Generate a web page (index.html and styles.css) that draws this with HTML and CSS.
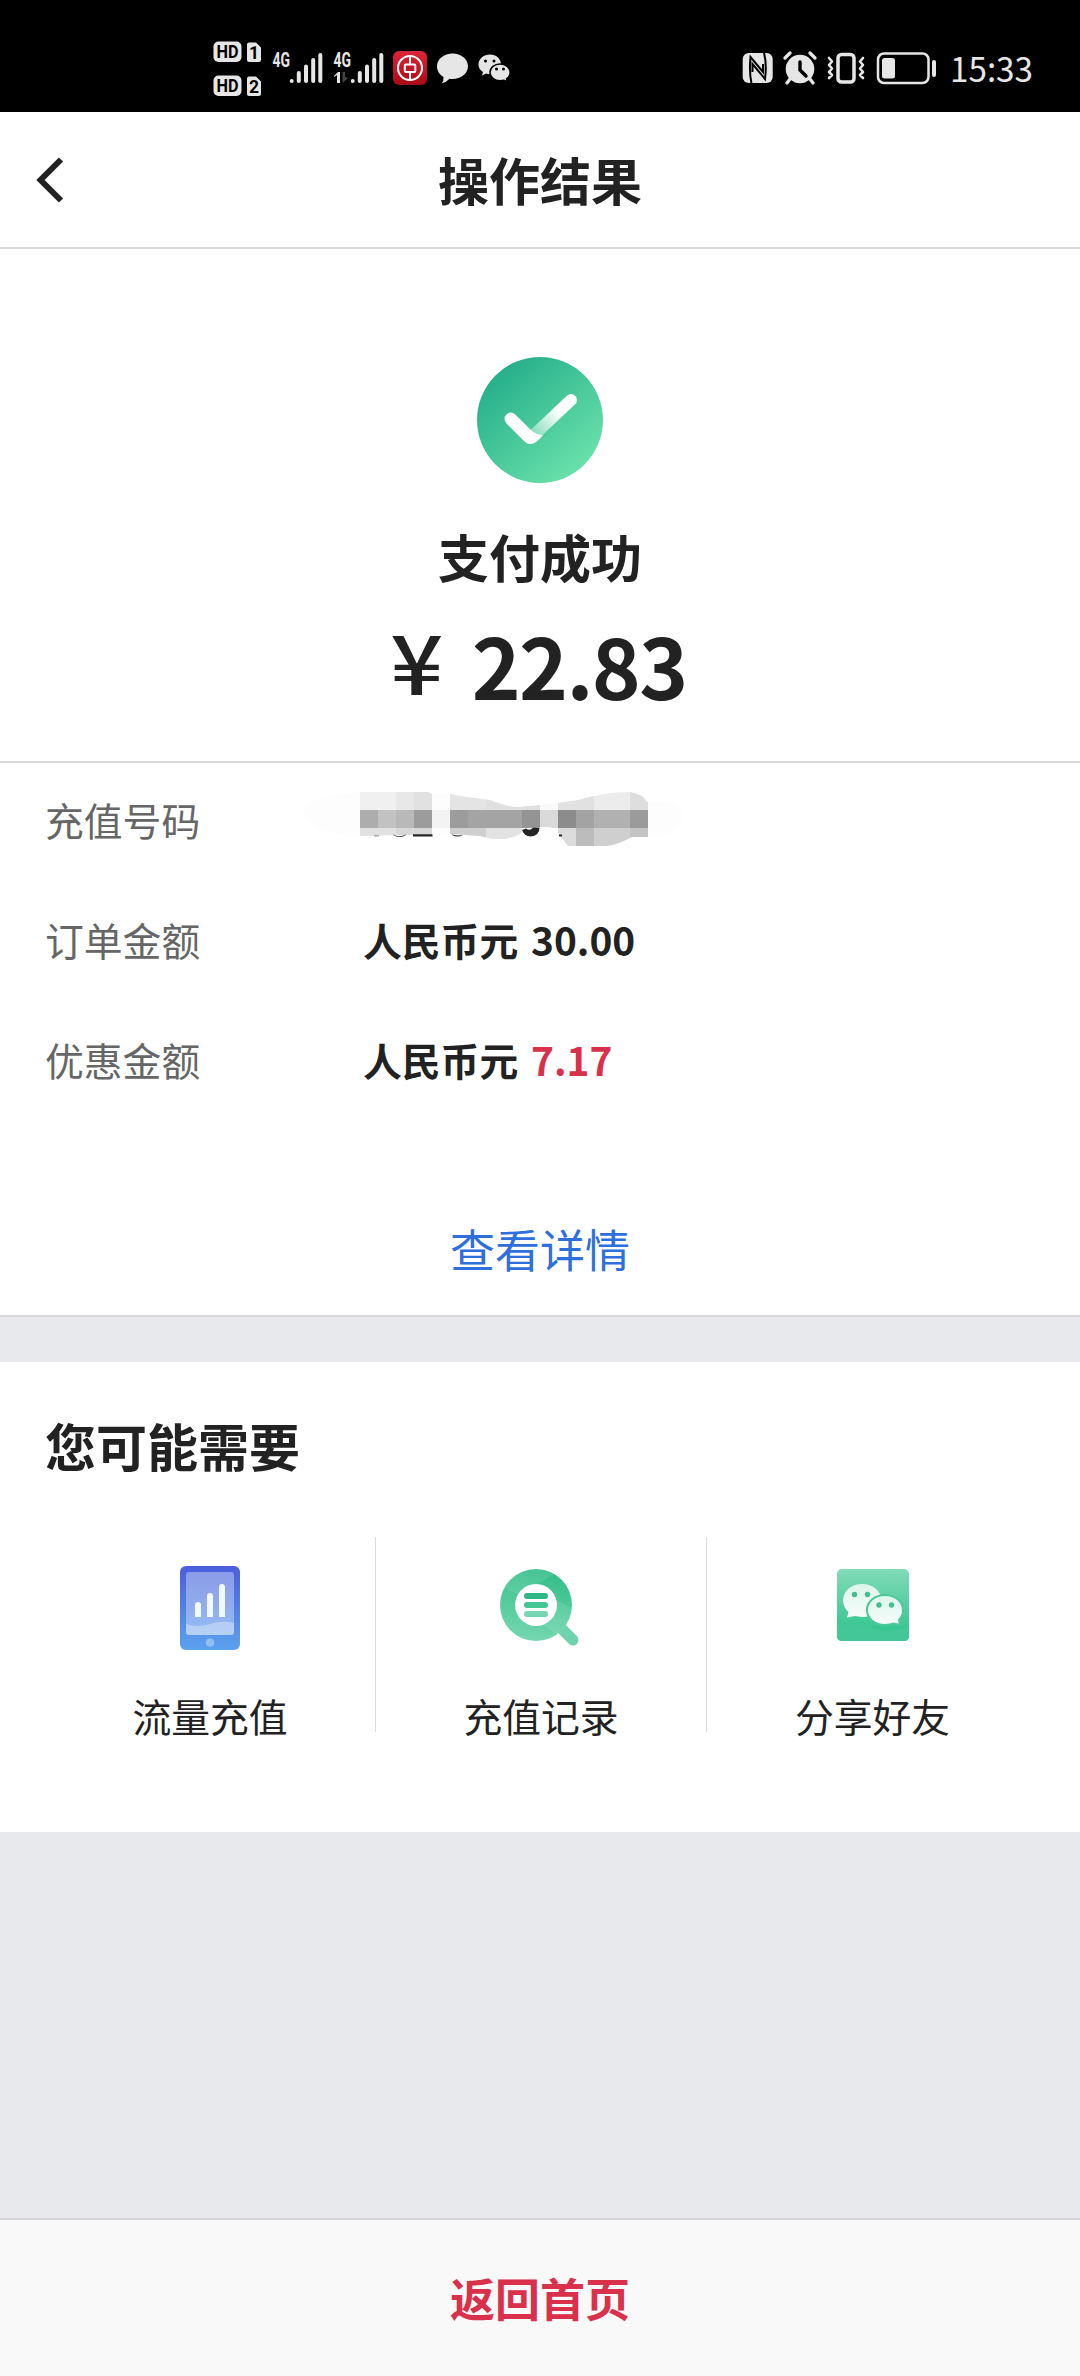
FILE: index.html
```html
<!DOCTYPE html>
<html lang="zh-CN">
<head>
<meta charset="utf-8">
<title>操作结果</title>
<link rel="stylesheet" href="styles.css">
</head>
<body>
<div class="screen">
  <div class="status">
    <div class="status-left">
      <svg width="48" height="60" viewBox="213 40 48 60">
        <g fill="#e6e6e6"><rect x="213.500" y="41.500" width="28" height="20.500" rx="5"/><rect x="213.500" y="75.500" width="28" height="20.500" rx="5"/>
        <path d="M249 42.500h7l5 5v12q0 2.500-2.500 2.500h-9.500q-2 0-2-2v-15.500q0-2 2-2zM249 76.500h7l5 5v12q0 2.500-2.500 2.500h-9.500q-2 0-2-2v-15.500q0-2 2-2z"/></g>
        <g class="badge-text"><text x="216.500" y="58.300" textLength="22" lengthAdjust="spacingAndGlyphs">HD</text><text x="216.500" y="92.300" textLength="22" lengthAdjust="spacingAndGlyphs">HD</text><text x="249" y="58.800">1</text><text x="249" y="92.800">2</text></g>
      </svg>
      <svg class="signal" width="52" height="60" viewBox="272 40 52 60">
        <text class="net-text" x="272.500" y="66.500" textLength="17.500" lengthAdjust="spacingAndGlyphs">4G</text>
        <g class="bars"><path d="M291.700 81v0M298.800 81V73M306 81V66.500M313.200 81V60M320.300 81V55"/></g>
      </svg>
      <svg class="signal-second" width="52" height="60" viewBox="333 40 52 60">
        <text class="net-text" x="333.500" y="66.500" textLength="17.500" lengthAdjust="spacingAndGlyphs">4G</text>
        <path d="M334 76l4-4h2v11h-3v-8l-3 2z" fill="#e6e6e6"/><path d="M342.500 72v11l5.500-5-3-1v-5z" fill="#444"/>
        <g class="bars"><path d="M352.700 81v0M359.800 81V73M367 81V66.500M374.200 81V60M381.300 81V55"/></g>
      </svg>
      <svg width="34" height="60" viewBox="393 40 34 60">
        <defs><linearGradient id="bank" x2="0" y2="1"><stop stop-color="#dc2636"/><stop offset="1" stop-color="#a80b15"/></linearGradient></defs>
        <rect x="393" y="51" width="34" height="34" rx="6" fill="url(#bank)"/>
        <g fill="none" stroke="#fff" stroke-width="2"><circle cx="410" cy="68" r="12"/><rect x="404.800" y="64.500" width="10.500" height="7.500" rx="1"/><path d="M410 56v8.500M410 72v8"/></g>
      </svg>
      <svg width="33" height="60" viewBox="436 40 33 60"><path fill="#e6e6e6" d="M452.500 53.500c8.600 0 15.500 5.600 15.500 12.800S461.100 79 452.500 79q-1.500 0-3-.2-3 3.600-7.800 4.400 2.200-2 1.800-6.200c-4-2.300-6.500-6-6.500-10.700 0-7.200 6.900-12.800 15.500-12.800z"/></svg>
      <svg width="32" height="60" viewBox="478 40 32 60">
        <path fill="#e6e6e6" d="M490 54.500c6 0 11 4 11 10s-5 9.500-11 9.500q-2 0-4-.5l-4 2 1-3.500c-3-2-4.500-4.500-4.500-7.500 0-6 5.500-10 11.500-10z"/>
        <path fill="#e6e6e6" stroke="#000" stroke-width="1.500" d="M500 64c5.500 0 10.200 3.600 10.200 8.300q0 4.200-3.700 6.500l.8 3-3.300-1.600q-2 .5-4 .5c-5.500 0-10-3.700-10-8.400s4.500-8.300 10-8.300z"/>
        <g><circle cx="485.500" cy="61" r="1.500"/><circle cx="494" cy="61" r="1.500"/><circle cx="496.500" cy="69" r="1.500"/><circle cx="503.500" cy="69" r="1.500"/></g>
      </svg>
    </div>
    <div class="status-right">
      <svg width="32" height="60" viewBox="742 40 32 60">
        <rect x="742.700" y="53" width="30" height="30" rx="6" fill="#e6e6e6"/>
        <path fill="none" stroke="#000" stroke-width="2" d="M751.500 83.500q-2.500-12-1-26.500l12.500 15V64M764 52.500q3 12 1 26.500l-12.500-15v8"/>
      </svg>
      <svg width="34" height="60" viewBox="783 40 34 60">
        <circle cx="800" cy="69" r="14.300" fill="#e6e6e6"/>
        <path d="M785 58l5-5M815 58l-5-5M790 79l-3 4M810 79l3 4" stroke="#e6e6e6" stroke-width="3.200" stroke-linecap="round"/>
        <path d="M800 62v8l6 6" fill="none" stroke="#000" stroke-width="3.400" stroke-linecap="round"/>
      </svg>
      <svg class="vibrate" width="40" height="60" viewBox="826 40 40 60"><g fill="none" stroke="#e6e6e6"><rect x="838" y="54.500" width="16" height="27.500" rx="3.500" stroke-width="3.500"/><path stroke-width="2.600" stroke-linejoin="round" stroke-linecap="round" d="M829 58l3 3.500-3 3.500 3 3.500-3 3.500 3 3-3 3M863 58l-3 3.500 3 3.500-3 3.500 3 3.500-3 3 3 3"/></g></svg>
      <svg width="61" height="60" viewBox="876 40 61 60"><rect x="878" y="53.500" width="50.500" height="29.500" rx="6" fill="none" stroke="#e6e6e6" stroke-width="2.500"/><rect x="882" y="58" width="13" height="20.500" rx="2.500" fill="#e6e6e6"/><rect x="932" y="60" width="4" height="17" rx="2" fill="#e6e6e6"/></svg>
      <svg width="84" height="60" viewBox="950 40 84 60"><text class="clock" x="950" y="82" textLength="83" lengthAdjust="spacingAndGlyphs">15:33</text></svg>
    </div>
  </div>

  <header class="header">
    <svg class="back" width="32" height="46" viewBox="0 0 32 46"><path d="M27 2.500L6.500 23 27 43.500" fill="none" stroke="#222" stroke-width="6"/></svg>
    <h1 class="title">操作结果</h1>
  </header>

  <section class="result">
    <svg width="126" height="126" viewBox="0 0 126 126">
      <defs>
        <linearGradient id="disc" x1=".15" y1=".1" x2=".85" y2=".9"><stop stop-color="#25ae8a"/><stop offset="1" stop-color="#6be2ab"/></linearGradient>
        <linearGradient id="fade" gradientUnits="userSpaceOnUse" x1="58" y1="78" x2="82" y2="54"><stop stop-color="#fff" stop-opacity=".35"/><stop offset="1" stop-color="#fff"/></linearGradient>
      </defs>
      <circle cx="63" cy="63" r="63" fill="url(#disc)"/>
      <path d="M58 77L94 43" stroke="url(#fade)" stroke-width="12" stroke-linecap="round"/>
      <path d="M29.500 66.500q-4-5 0-9t9 .2L54 73q5 5 12 5-7 9-12.500 9-3.500 0-6-2.500z" fill="#fff"/>
    </svg>
    <h2 class="result-title">支付成功</h2>
    <div class="amount"><span class="yen">¥</span><span class="figure">22.83</span></div>
  </section>

  <section class="details">
    <div class="row"><span class="label">充值号码</span>
      <svg class="mosaic" width="400" height="90" viewBox="0 0 400 90">
        <defs><clipPath id="smear"><path d="M14 38Q25 26 70 22H138L142 24H160L177 27 200 30Q218 37 228 37L260 34 288 30Q315 22 340 22 353 24 357 32H376Q394 35 392 46 390 66 358 67L342 67Q325 76 316 76H278L268 63Q264 56 256 57L238 58Q226 68 215 69H203L190 66 160 64 70 66Q15 64 14 38z"/></clipPath></defs>
        <g clip-path="url(#smear)">
          <path fill="#fdfdfd" d="M0 20h400v60H0z"/>
          <path fill="#f0f0f0" d="M70 22h36v18H70z"/><path fill="#e8e8e8" d="M106 22h18v18h-18z"/><path fill="#e1e1e1" d="M124 22h18v18h-18z"/><path fill="#e4e4e4" d="M160 22h36v18h-36z"/><path fill="#e0e0e0" d="M196 22h54v18h-54z"/><path fill="#fafafa" d="M250 22h18v18h-18z"/><path fill="#e1e1e1" d="M268 22h36v18h-36z"/><path fill="#ececec" d="M304 22h36v18h-36z"/><path fill="#dedede" d="M340 22h18v18h-18z"/>
          <path fill="#adadad" d="M70 40h18v18H70z"/><path fill="#c2c2c2" d="M88 40h18v18H88z"/><path fill="#b9b9b9" d="M106 40h18v18h-18z"/><path fill="#9c9c9c" d="M124 40h18v18h-18z"/><path fill="#f3f3f3" d="M142 40h18v18h-18z"/><path fill="#9c9c9c" d="M160 40h18v18h-18z"/><path fill="#a4a4a4" d="M178 40h54v18h-54z"/><path fill="#949494" d="M232 40h18v18h-18z"/><path fill="#dadada" d="M250 40h18v18h-18z"/><path fill="#8c8c8c" d="M268 40h18v18h-18z"/><path fill="#a3a3a3" d="M286 40h18v18h-18z"/><path fill="#b1b1b1" d="M304 40h36v18h-36z"/><path fill="#9b9b9b" d="M340 40h18v18h-18z"/>
          <path fill="#e1e1e1" d="M70 58h36v18H70z"/><path fill="#d8d8d8" d="M106 58h36v18h-36z"/><path fill="#cfcfcf" d="M160 58h36v18h-36z"/><path fill="#e2e2e2" d="M196 58h36v18h-36z"/><path fill="#dcdcdc" d="M268 58h18v18h-18z"/><path fill="#bcbcbc" d="M286 58h18v18h-18z"/><path fill="#cfcfcf" d="M304 58h36v18h-36z"/><path fill="#c4c4c4" d="M340 58h18v18h-18z"/>
        </g>
        <path fill="#aaa" d="M84 65h5v1.500h-5z"/>
        <path fill="#242424" d="M103 64.500q6 3.500 13 0v.5q-6 4-13 0zM123 64.300h19.500v2.200H123zM162 64.500q6 1.500 11 .500-5 3-11 0zM269 64.500h3v2h-3zM232 60l4-1.500q4 3 7-1l6.500.300q0 8.200-9 8.700-6 0-8.500-6.500z"/>
      </svg>
    </div>
    <div class="row"><span class="label">订单金额</span><span class="value">人民币元 30.00</span></div>
    <div class="row"><span class="label">优惠金额</span><span class="value">人民币元 <span class="discount">7.17</span></span></div>
    <a class="more">查看详情</a>
  </section>

  <section class="needs">
    <h3 class="needs-title">您可能需要</h3>
    <div class="needs-list">
      <div class="need">
        <svg width="110" height="110" viewBox="0 0 110 110">
          <defs><linearGradient id="phone" x2="0" y2="1"><stop stop-color="#4a5edb"/><stop offset="1" stop-color="#5ba2ee"/></linearGradient></defs>
          <rect x="25" y="16" width="60" height="84" rx="6" fill="url(#phone)"/>
          <rect x="31" y="22" width="48" height="63" rx="3" fill="#fff" opacity=".36"/>
          <path d="M31 74q12 4 24 0t24-1v9q0 3-3 3H34q-3 0-3-3z" fill="#fff" opacity=".33"/>
          <path d="M40 67V55a3 3 0 0 1 6 0v12zM52 67V46a3 3 0 0 1 6 0v21zM64 67V37a3 3 0 0 1 6 0v30z" fill="#f1f8ff"/>
          <circle cx="55" cy="92.500" r="4.300" fill="#91bff3"/>
        </svg>
        <span>流量充值</span>
      </div>
      <div class="need">
        <svg width="110" height="110" viewBox="0 0 110 110">
          <defs><linearGradient id="ring" x1=".6" x2=".4" y2="1"><stop stop-color="#31bd88"/><stop offset="1" stop-color="#75d7b1"/></linearGradient></defs>
          <path d="M76 79l11 11" stroke="#6fd4ad" stroke-width="11" stroke-linecap="round"/>
          <circle cx="50" cy="55" r="36" fill="url(#ring)"/>
          <path d="M19 37A36 36 0 0 1 50 19q10 0 18 5L36 44Q24 43 19 37zM71 51q12 4 15 9a36 36 0 0 1-16 25L58 75z" fill="#fff" opacity=".1"/>
          <circle cx="50" cy="55" r="21" fill="#fff"/>
          <rect x="38" y="43" width="24" height="6" rx="3" fill="#2eb887"/><rect x="38" y="52" width="24" height="6" rx="3" fill="#45c697"/><rect x="38" y="61" width="24" height="6" rx="3" fill="#76d5b3"/>
        </svg>
        <span>充值记录</span>
      </div>
      <div class="need">
        <svg width="110" height="110" viewBox="0 0 110 110">
          <defs><linearGradient id="share" x2="0" y2="1"><stop stop-color="#82dbb9"/><stop offset="1" stop-color="#29c28b"/></linearGradient><linearGradient id="bubble" x2="0" y2="1"><stop stop-color="#def5ec"/><stop offset="1" stop-color="#f5fdfa"/></linearGradient></defs>
          <rect x="19" y="19" width="72" height="72" rx="5" fill="url(#share)"/>
          <path d="M19 77q15-6 31 0t41 0v9q0 5-5 5H24q-5 0-5-5z" fill="#44c798"/>
          <path d="M44 34c11 0 19.500 7.300 19.500 16.500S55 67 44 67l-7-1-8 1.500 1.500-5.500C27 59 25 55 25 50.500 25 41.300 33 34 44 34z" fill="url(#bubble)"/>
          <path d="M67 45c10 0 18 6.500 18 15q0 6-4 10l1 5-6-1.500q-4 1.500-9 1.500c-10 0-18-6.500-18-15s8-15 18-15z" fill="url(#bubble)" stroke="#4cc899" stroke-width="2"/>
          <g fill="#43bd91"><circle cx="36.500" cy="44.500" r="2.700"/><circle cx="49.500" cy="44.500" r="2.700"/><circle cx="61" cy="55" r="2.700"/><circle cx="73.500" cy="55" r="2.700"/></g>
        </svg>
        <span>分享好友</span>
      </div>
    </div>
  </section>

  <footer class="footer">返回首页</footer>
</div>
</body>
</html>
```
FILE: styles.css
```css
* { box-sizing: border-box; }
body { margin: 0; font-family: "Noto Sans CJK SC", sans-serif; color: #222; background: #e8e9ed; }
svg { display: block; flex: none; }
h1, h2, h3 { margin: 0; font-size: 51px; line-height: 74px; font-weight: 700; }
.screen { width: 1080px; height: 2376px; display: flex; flex-direction: column; }
.status { height: 112px; flex: none; background: #000; display: flex; justify-content: space-between; padding: 40px 46px 0 213px; }
.status-left { display: flex; gap: 9px; }
.signal { margin-left: 2px; }
.signal-second { margin-right: -1px; }
.status-right { display: flex; gap: 9px; }
.vibrate { margin-right: 1px; }
.status-right svg:last-child { margin-left: 4px; }
.badge-text { font: 700 17.5px Roboto, sans-serif; fill: #000; }
.net-text { font: 700 19.5px Roboto, sans-serif; fill: #e6e6e6; }
.bars { fill: none; stroke: #e6e6e6; stroke-width: 4; stroke-linecap: round; }
.clock { font: 400 34px "Noto Sans CJK SC", sans-serif; fill: #e6e6e6; }
.header { height: 137px; flex: none; background: #fff; border-bottom: 2px solid #d8d8d9; display: grid; grid-template-columns: 100px 1fr 100px; align-items: center; }
.back { margin-left: 34px; }
.title { text-align: center; padding-bottom: 2px; }
.result { height: 514px; flex: none; background: #fff; border-bottom: 2px solid #d8d8d9; padding-top: 108px; display: flex; flex-direction: column; align-items: center; }
.result-title { margin-top: 36px; }
.amount { display: flex; gap: 31px; margin: 11px 0 0 0; font-size: 83px; line-height: 120px; font-weight: 700; }
.yen { font-weight: 500; line-height: 110px; transform: scaleX(1.12); }
.figure { letter-spacing: -1.6px; }
.details { height: 554px; flex: none; background: #fff; border-bottom: 2px solid #d8d8dd; display: flex; flex-direction: column; font-size: 38.8px; }
.row { height: 120px; flex: none; padding: 28px 0 0 45px; display: flex; align-items: flex-start; line-height: 56px; }
.label { width: 318px; color: #666; }
.value { font-weight: 700; word-spacing: 4px; }
.discount { color: #d9304c; }
.mosaic { margin: -21px 0 0 -73px; }
.more { margin: 93px auto 0; font-size: 45px; line-height: 66px; color: #2f6fdc; }
.needs { height: 470px; flex: none; margin-top: 45px; background: #fff; padding: 46px 42px 0 45px; }
.needs-title { line-height: 74px; }
.needs-list { display: grid; grid-template-columns: repeat(3, 331px); height: 195px; margin-top: 55px; }
.need { border-right: 1px solid #dcdce0; display: flex; flex-direction: column; align-items: center; padding-top: 13px; font-size: 38.8px; line-height: 56px; gap: 27px; height: 195px; }
.need:last-child { border-right: 0; }
.footer { height: 158px; margin-top: auto; flex: none; background: #f9f9f9; border-top: 2px solid #d2d2d8; display: flex; justify-content: center; align-items: center; font-size: 45px; font-weight: 700; line-height: 66px; color: #d9304c; }
```
